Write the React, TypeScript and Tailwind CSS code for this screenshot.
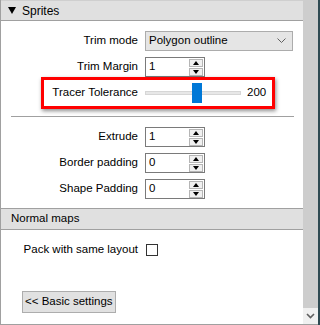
import * as React from "react";

function Spinner() {
    return (
        <div className="flex flex-col w-[14px] h-[17px] gap-[1px]">
            <div className="flex-1 flex items-center justify-center bg-[#f0f0f0] border border-[#b5b5b5]">
                <div className="w-0 h-0 border-l-[3px] border-r-[3px] border-b-[4px] border-l-transparent border-r-transparent border-b-black"/>
            </div>
            <div className="flex-1 flex items-center justify-center bg-[#f0f0f0] border border-[#b5b5b5]">
                <div className="w-0 h-0 border-l-[3px] border-r-[3px] border-t-[4px] border-l-transparent border-r-transparent border-t-black"/>
            </div>
        </div>
    )
}

function NumberBox({value}: { value: string }) {
    return (
        <div className="w-[60px] h-[20px] bg-white border border-[#7a7a7a] flex items-center pl-[3px] pr-[1px]">
            <span className="flex-1">{value}</span>
            <Spinner/>
        </div>
    )
}

function Row({label, children}: { label: string, children: React.ReactNode }) {
    return (
        <div className="flex items-center h-[20px]">
            <div className="w-[137px] text-right whitespace-nowrap">{label}</div>
            <div className="pl-[7px] flex items-center">{children}</div>
        </div>
    )
}

export default function App() {
    return (
        <div className="w-[320px] h-[325px] flex bg-white text-[11.5px] text-black"
             style={{fontFamily: '"Liberation Sans", Arial, sans-serif'}}>
            <div className="w-[318px] h-[325px] flex border-l border-b border-[#a0a0a0]">
                <div className="relative w-[302px] flex flex-col">
                    {/* Sprites header */}
                    <div className="h-[21px] flex items-center gap-[6px] pl-[7px] bg-[#e0e0e0] border-t border-b border-t-[#cfcfcf] border-b-[#a0a0a0] text-[12px]">
                        <div className="w-0 h-0 border-l-[4px] border-r-[4px] border-t-[7px] border-l-transparent border-r-transparent border-t-black"/>
                        <span>Sprites</span>
                    </div>

                    <div className="flex flex-col gap-[6px] pt-[10px]">
                        <Row label="Trim mode">
                            <div className="w-[148px] h-[20px] bg-[#e5e5e5] border border-[#acacac] flex items-center pl-[3px] pr-[6px]">
                                <span className="flex-1">Polygon outline</span>
                                <svg width="9" height="6" viewBox="0 0 9 6" fill="none" stroke="#606060" strokeWidth="1">
                                    <path d="M0.5 0.5 L4.5 4.5 L8.5 0.5"/>
                                </svg>
                            </div>
                        </Row>
                        <Row label="Trim Margin">
                            <NumberBox value="1"/>
                        </Row>
                        <Row label="Tracer Tolerance">
                            <div className="relative w-[96px] h-[20px] flex items-center">
                                <div className="w-full h-[4px] bg-[#e7e7e7] border border-[#d6d6d6]"/>
                                <div className="absolute left-[47px] top-0 w-[10px] h-[20px] bg-[#0078d7]"/>
                            </div>
                            <span className="pl-[6px]">200</span>
                        </Row>
                    </div>

                    <div className="mt-[13px] mx-[10px] w-[283px] h-[1px] bg-[#a0a0a0]"/>

                    <div className="flex flex-col gap-[6px] pt-[10px]">
                        <Row label="Extrude"><NumberBox value="1"/></Row>
                        <Row label="Border padding"><NumberBox value="0"/></Row>
                        <Row label="Shape Padding"><NumberBox value="0"/></Row>
                    </div>

                    {/* Normal maps header */}
                    <div className="mt-[9px] h-[22px] flex items-center pl-[10px] bg-[#e0e0e0] border-t border-b border-[#a0a0a0]">
                        Normal maps
                    </div>

                    <div className="pt-[10px] flex items-center h-[30px]">
                        <div className="w-[137px] text-right whitespace-nowrap">Pack with same layout</div>
                        <div className="ml-[8px] w-[12px] h-[12px] border border-[#333333] bg-white"/>
                    </div>

                    <div className="pl-[21px] pt-[31px]">
                        <button className="w-[94px] h-[22px] bg-[#e1e1e1] border border-[#adadad] text-left pl-[2px] whitespace-nowrap overflow-hidden">
                            &lt;&lt; Basic settings
                        </button>
                    </div>

                    {/* highlight annotation */}
                    <div className="absolute left-[40px] top-[77px] w-[234px] h-[32px] border-[3px] border-[#ff0000] shadow-[1px_2px_4px_rgba(0,0,0,0.45)]"/>
                </div>

                {/* scrollbar */}
                <div className="w-[15px] flex flex-col bg-[#cdcdcd]">
                    <div className="flex-1"/>
                    <div className="h-[16px] bg-[#f0f0f0] flex items-center justify-center">
                        <svg width="9" height="6" viewBox="0 0 9 6" fill="none" stroke="#606060" strokeWidth="1.6">
                            <path d="M1 1 L4.5 4.5 L8 1"/>
                        </svg>
                    </div>
                </div>
            </div>
            <div className="w-[2px] h-[325px] bg-[#2f4a52]"/>
        </div>
    )
}
